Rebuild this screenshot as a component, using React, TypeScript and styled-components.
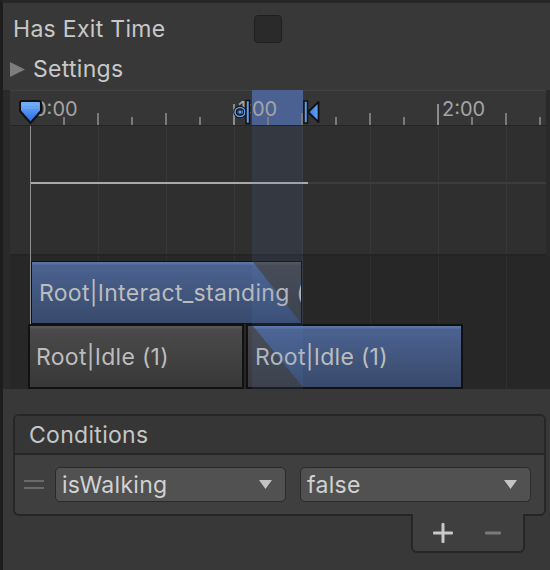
import React from 'react';
import styled, { createGlobalStyle } from 'styled-components';

const GlobalStyle = createGlobalStyle`
  html, body {
    margin: 0;
    padding: 0;
    background: #383838;
  }
  body {
    font-family: Inter, "Noto Sans", sans-serif;
    color: #c6c6c6;
    letter-spacing: 0.3px;
  }
`;

// ruler / clip area share the same origin: 0:00 sits 20px in
const ORIGIN = 20;
const TICK = 34;
const SEC = TICK * 6;

const Page = styled.div`
  width: 547px;
  height: 567px;
  border-top: 3px solid #262626;
  border-left: 3px solid #1d1d1d;
  background: #383838;
  display: flex;
  flex-direction: column;
  overflow: hidden;
`;

const Header = styled.div`
  padding-top: 6px;
  display: flex;
  flex-direction: column;
`;

const FieldRow = styled.div<{ $indent: number }>`
  height: 40px;
  display: flex;
  align-items: center;
  padding-left: ${({ $indent }) => $indent}px;
  font-size: 23px;
  color: #c8c8c8;
`;

const FieldLabel = styled.div`
  width: 241px;
  white-space: nowrap;
`;

const Checkbox = styled.div`
  width: 26px;
  height: 26px;
  border: 1px solid #1f1f1f;
  border-radius: 4px;
  background: #2a2a2a;
`;

const FoldArrow = styled.svg`
  width: 15px;
  height: 15px;
  margin-right: 8px;
  flex-shrink: 0;
`;

const Timeline = styled.div`
  position: relative;
  margin-top: 1px;
  height: 299px;
  background: #2a2a2a;
  display: flex;
  flex-direction: column;
`;

const Upper = styled.div`
  margin-left: 7px;
  width: 536px;
  height: 166px;
  display: flex;
  flex-direction: column;
`;

const Ruler = styled.div`
  position: relative;
  height: 35px;
  background: #363636;
  box-shadow: inset 0 1px 0 #424242;
  border-bottom: 1px solid #242424;
  overflow: hidden;
`;

const RulerBand = styled.div<{ $left: number; $width: number }>`
  position: absolute;
  top: 0;
  bottom: 0;
  left: ${({ $left }) => $left}px;
  width: ${({ $width }) => $width}px;
  background: #4a6192;
`;

const Tick = styled.div<{ $h: number; $major: boolean }>`
  position: absolute;
  bottom: 0;
  width: 2px;
  height: ${({ $h }) => $h}px;
  margin-left: -1px;
  background: ${({ $major }) => ($major ? '#8c8c8c' : '#7a7a7a')};
`;

const TickLabel = styled.div`
  position: absolute;
  top: 7px;
  font-size: 20px;
  line-height: 1.21;
  letter-spacing: 0;
  color: #a4a4a4;
`;

const Marker = styled.svg<{ $left: number }>`
  position: absolute;
  top: 9px;
  left: ${({ $left }) => $left}px;
  overflow: visible;
`;

const Track = styled.div`
  position: relative;
  flex: 1;
  background: #2f2f2f;
  border-bottom: 2px solid #242424;
  overflow: hidden;
`;

const GridLine = styled.div<{ $color: string }>`
  position: absolute;
  top: 0;
  bottom: 0;
  width: 1px;
  background: ${({ $color }) => $color};
`;

const CurveLine = styled.div<{ $left: number; $width: number; $bright: boolean }>`
  position: absolute;
  top: 56px;
  left: ${({ $left }) => $left}px;
  width: ${({ $width }) => $width}px;
  height: 2px;
  background: ${({ $bright }) => ($bright ? '#a9a9a9' : '#3c3c3c')};
`;

const ClipsArea = styled.div`
  position: relative;
  margin-left: 7px;
  flex: 1;
  background: #272727;
  overflow: hidden;
`;

const Playhead = styled.div`
  position: absolute;
  left: 27px;
  top: 36px;
  bottom: 0;
  width: 1px;
  background: #8e8e8e;
`;

const TransitionTint = styled.div<{ $left: number; $width: number }>`
  position: absolute;
  top: 36px;
  bottom: 0;
  left: ${({ $left }) => $left}px;
  width: ${({ $width }) => $width}px;
  background: rgba(90, 130, 200, 0.12);
  pointer-events: none;
`;

const ClipCanvas = styled.div`
  position: absolute;
  left: 7px;
  right: 0;
  top: 168px;
  bottom: 0;
`;

const Clip = styled.div<{ $left: number; $top: number; $width: number; $height: number; $border: number; $tone: 'blue' | 'gray' }>`
  position: absolute;
  box-sizing: border-box;
  left: ${({ $left }) => $left}px;
  top: ${({ $top }) => $top}px;
  width: ${({ $width }) => $width}px;
  height: ${({ $height }) => $height}px;
  border: ${({ $border }) => $border}px solid #111111;
  background: ${({ $tone }) =>
    $tone === 'blue'
      ? 'linear-gradient(to bottom, #5b73a3 0, #5b73a3 2px, #4b6290 3px, #384a6c 100%)'
      : 'linear-gradient(to bottom, #565656 0, #565656 2px, #4a4a4a 3px, #383838 100%)'};
  overflow: hidden;
  display: flex;
  align-items: center;
`;

const Fade = styled.div<{ $shape: string }>`
  position: absolute;
  inset: 0;
  background: linear-gradient(to bottom, #4d4e52 0, #4d4e52 2px, #44464a 3px, #393a3e 100%);
  clip-path: ${({ $shape }) => $shape};
`;

const ClipLabel = styled.div<{ $pad: number }>`
  position: relative;
  padding-left: ${({ $pad }) => $pad}px;
  font-size: 23px;
  color: #bcbcbc;
  white-space: nowrap;
`;

const Conditions = styled.div`
  margin: 25px 4px 0 10px;
  display: flex;
  flex-direction: column;
  align-items: flex-end;
`;

const Panel = styled.div`
  align-self: stretch;
  border: 2px solid #262626;
  border-radius: 6px;
  background: #3f3f3f;
  overflow: hidden;
`;

const PanelHeader = styled.div`
  height: 37px;
  display: flex;
  align-items: center;
  padding-left: 14px;
  background: #363636;
  border-bottom: 2px solid #262626;
  font-size: 23px;
  color: #c6c6c6;
`;

const ConditionRow = styled.div`
  height: 59px;
  display: flex;
  align-items: center;
  padding: 0 13px 0 9px;
`;

const DragHandle = styled.div`
  width: 20px;
  height: 9px;
  margin-right: 11px;
  border-top: 2px solid #6a6a6a;
  border-bottom: 2px solid #6a6a6a;
  box-sizing: border-box;
`;

const Dropdown = styled.div`
  box-sizing: border-box;
  width: 231px;
  height: 35px;
  display: flex;
  align-items: center;
  justify-content: space-between;
  padding: 0 13px 0 6px;
  background: #515151;
  border: 1.5px solid #2a2a2a;
  border-radius: 5px;
  font-size: 23px;
  color: #d2d2d2;
  & + & {
    margin-left: 14px;
  }
`;

const Caret = styled.svg`
  width: 13px;
  height: 9px;
`;

const Footer = styled.div`
  position: relative;
  margin: -2px 21px 0 0;
  box-sizing: border-box;
  width: 114px;
  height: 39px;
  padding: 0 10px;
  display: flex;
  align-items: center;
  gap: 10px;
  background: #3f3f3f;
  border: 2px solid #262626;
  border-top: none;
  border-radius: 0 0 6px 6px;
`;

const IconButton = styled.div<{ $dim?: boolean }>`
  position: relative;
  width: 40px;
  height: 24px;
  &::before,
  &::after {
    content: '';
    position: absolute;
    left: 50%;
    top: 50%;
    background: ${({ $dim }) => ($dim ? '#7a7a7a' : '#c8c8c8')};
    border-radius: 1px;
    transform: translate(-50%, -50%);
  }
  &::before {
    width: ${({ $dim }) => ($dim ? 16 : 20)}px;
    height: 3px;
  }
  &::after {
    width: 3px;
    height: ${({ $dim }) => ($dim ? 0 : 20)}px;
  }
`;

const ticks = Array.from({ length: 16 }, (_, i) => i).slice(1);
const labels = ['0:00', '1:00', '2:00'];
const grid = [1, 2, 3, 4, 5, 6, 7].map((k) => ORIGIN + k * TICK * 2);

const bandLeft = 242;
const bandWidth = 51;

function StartMarker() {
  return (
    <Marker $left={ORIGIN - 12} width="25" height="26" viewBox="0 0 25 26">
      <defs>
        <linearGradient id="startFill" x1="0" y1="0" x2="0" y2="1">
          <stop offset="0" stopColor="#7ab2f7" />
          <stop offset="0.5" stopColor="#4d8fee" />
          <stop offset="1" stopColor="#2a66d6" />
        </linearGradient>
      </defs>
      <path d="M4 2 H21 Q23 2 23 4 V12 L12.5 24 L2 12 V4 Q2 2 4 2 Z" fill="url(#startFill)" stroke="#111" strokeWidth="2" strokeLinejoin="round" />
      <path d="M4 6 H21 M4 9 H21" stroke="#8cc0ff" strokeWidth="0.8" opacity="0.5" />
    </Marker>
  );
}

function ExitMarker() {
  return (
    <Marker $left={223} width="18" height="26" viewBox="0 0 18 26">
      <ellipse cx="7" cy="13" rx="5" ry="4.5" fill="none" stroke="#111" strokeWidth="3.5" />
      <ellipse cx="7" cy="13" rx="5" ry="4.5" fill="none" stroke="#5d9cf0" strokeWidth="1.6" />
      <circle cx="7" cy="13" r="1.5" fill="#5d9cf0" />
      <rect x="13" y="1.5" width="3.5" height="23" fill="#5d9cf0" stroke="#111" strokeWidth="1.5" />
    </Marker>
  );
}

function EndMarker() {
  return (
    <Marker $left={292} width="18" height="26" viewBox="0 0 18 26">
      <defs>
        <linearGradient id="endFill" x1="0" y1="0" x2="1" y2="0">
          <stop offset="0" stopColor="#2f6ddc" />
          <stop offset="1" stopColor="#6aa8f6" />
        </linearGradient>
      </defs>
      <rect x="2" y="2" width="3.5" height="22" fill="#5d9cf0" stroke="#111" strokeWidth="1.5" />
      <polygon points="6,13 16.5,3 16.5,23" fill="url(#endFill)" stroke="#111" strokeWidth="1.8" strokeLinejoin="round" />
    </Marker>
  );
}

function ClipLayer() {
  return (
    <ClipCanvas>
      <Clip $left={21} $top={3} $width={271} $height={63} $border={1} $tone="blue">
        <Fade $shape="polygon(221px 0, 100% 0, 100% 100%)" />
        <ClipLabel $pad={7}>Root|Interact_standing (1)</ClipLabel>
      </Clip>
      <Clip $left={18} $top={66} $width={216} $height={65} $border={2} $tone="gray">
        <ClipLabel $pad={6}>Root|Idle (1)</ClipLabel>
      </Clip>
      <Clip $left={236} $top={66} $width={217} $height={65} $border={2} $tone="blue">
        <Fade $shape="polygon(0 0, 5px 0, 55px 100%, 0 100%)" />
        <ClipLabel $pad={7}>Root|Idle (1)</ClipLabel>
      </Clip>
    </ClipCanvas>
  );
}

export default function App() {
  return (
    <>
      <GlobalStyle />
      <Page>
        <Header>
          <FieldRow $indent={10}>
            <FieldLabel>Has Exit Time</FieldLabel>
            <Checkbox />
          </FieldRow>
          <FieldRow $indent={7}>
            <FoldArrow viewBox="0 0 15 15">
              <polygon points="0,0 15,7.5 0,15" fill="#7d7d7d" />
            </FoldArrow>
            Settings
          </FieldRow>
        </Header>

        <Timeline>
          <Upper>
            <Ruler>
              <RulerBand $left={bandLeft} $width={bandWidth} />
              {ticks.map((i) => (
                <Tick
                  key={i}
                  style={{ left: ORIGIN + i * TICK }}
                  $major={i % 6 === 0}
                  $h={i % 6 === 0 ? 21 : i % 2 === 0 ? 12 : 8}
                />
              ))}
              {labels.map((l, i) => (
                <TickLabel key={l} style={{ left: ORIGIN + i * SEC + 4 }}>
                  {l}
                </TickLabel>
              ))}
              <StartMarker />
              <ExitMarker />
              <EndMarker />
            </Ruler>
            <Track>
              {grid.map((x) => (
                <GridLine key={x} $color="#383838" style={{ left: x }} />
              ))}
              <CurveLine $left={ORIGIN} $width={278} $bright />
              <CurveLine $left={ORIGIN + 278} $width={240} $bright={false} />
            </Track>
          </Upper>
          <ClipsArea>
            {grid.map((x) => (
              <GridLine key={x} $color="#2f2f2f" style={{ left: x }} />
            ))}
          </ClipsArea>

          <Playhead />

          <ClipLayer />

          <TransitionTint $left={bandLeft + 7} $width={bandWidth} />
        </Timeline>

        <Conditions>
          <Panel>
            <PanelHeader>Conditions</PanelHeader>
            <ConditionRow>
              <DragHandle />
              <Dropdown>
                isWalking
                <Caret viewBox="0 0 13 9">
                  <polygon points="0,0 13,0 6.5,9" fill="#c4c4c4" />
                </Caret>
              </Dropdown>
              <Dropdown>
                false
                <Caret viewBox="0 0 13 9">
                  <polygon points="0,0 13,0 6.5,9" fill="#c4c4c4" />
                </Caret>
              </Dropdown>
            </ConditionRow>
          </Panel>
          <Footer>
            <IconButton />
            <IconButton $dim />
          </Footer>
        </Conditions>
      </Page>
    </>
  );
}
